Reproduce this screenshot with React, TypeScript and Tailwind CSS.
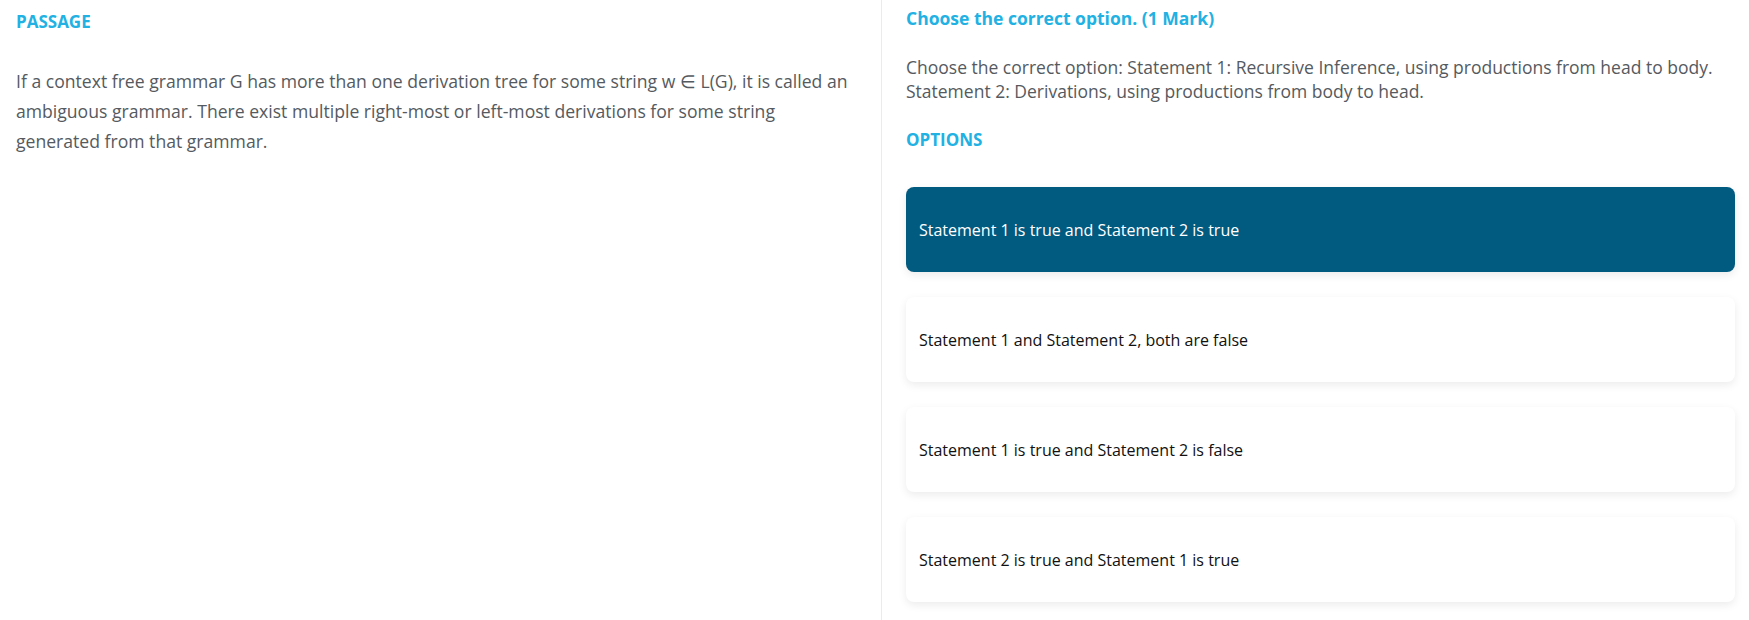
const options = [
  "Statement 1 is true and Statement 2 is true",
  "Statement 1 and Statement 2, both are false",
  "Statement 1 is true and Statement 2 is false",
  "Statement 2 is true and Statement 1 is true",
];

const App = () => {
  const selected = 0;

  return (
    <div className="flex w-[1749px] h-[620px] bg-white font-['Open_Sans',sans-serif] overflow-hidden">
      <div className="w-[882px] shrink-0 border-r border-[#ebebeb] pl-4 pr-[10px] pt-[10px]">
        <h2 className="text-[17px] leading-[24px] font-bold text-[#22b1e3]">PASSAGE</h2>
        <p className="mt-[32px] text-[17.6px] leading-[30px] text-[#555a60] whitespace-nowrap">
          If a context free grammar G has more than one derivation tree for some string w ∈ L(G), it is called an
          <br />
          ambiguous grammar. There exist multiple right-most or left-most derivations for some string
          <br />
          generated from that grammar.
        </p>
      </div>

      <div className="flex-1 pl-[24px] pr-[14px] pt-[6px]">
        <h2 className="text-[17.5px] leading-[24px] font-bold text-[#22b1e3]">Choose the correct option. (1 Mark)</h2>
        <p className="mt-[25px] text-[17.5px] leading-[24px] text-[#555a60]">
          Choose the correct option: Statement 1: Recursive Inference, using productions from head to body.
          <br />
          Statement 2: Derivations, using productions from body to head.
        </p>
        <h3 className="mt-[25px] text-[17px] leading-[24px] font-bold text-[#22b1e3]">OPTIONS</h3>

        <div className="mt-[35px] flex flex-col gap-[25px]">
          {options.map((opt, i) => (
            <div
              key={opt}
              className={
                i === selected
                  ? "h-[85px] flex items-center px-[13px] rounded-[8px] bg-[#015a80] text-white text-[16px] shadow-[0_3px_8px_rgba(0,0,0,0.08)]"
                  : "h-[85px] flex items-center px-[13px] rounded-[8px] bg-white text-[#111] text-[16px] shadow-[0_3px_8px_rgba(0,0,0,0.08)]"
              }>
              {opt}
            </div>
          ))}
        </div>
      </div>
    </div>
  );
};

export default App;
